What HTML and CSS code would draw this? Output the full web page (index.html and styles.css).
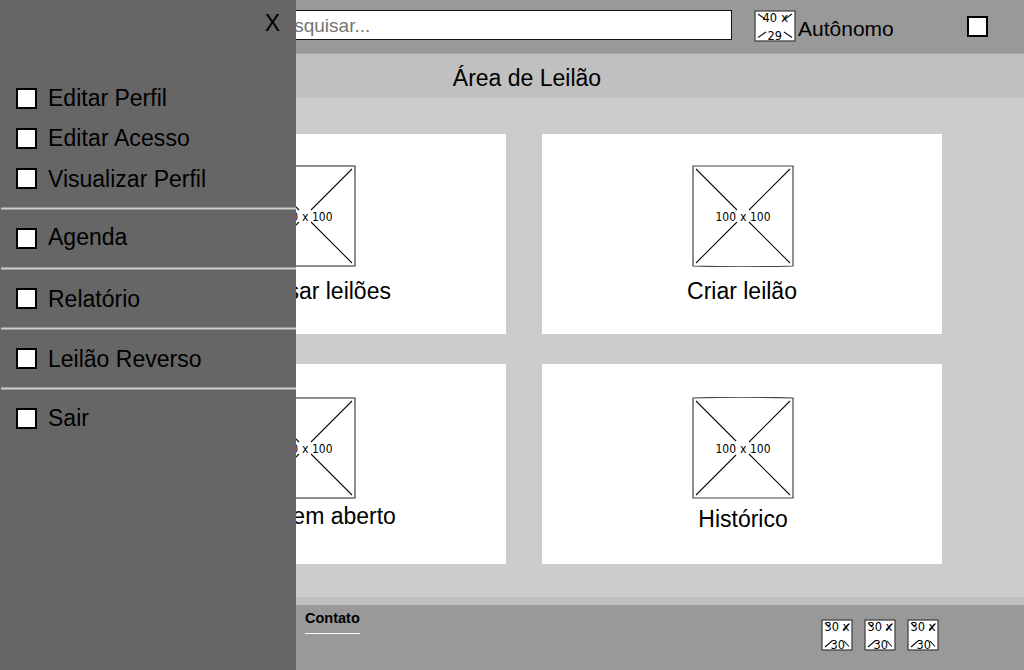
FILE: index.html
```html
<!DOCTYPE html>
<html lang="pt-BR">
<head>
<meta charset="utf-8">
<title>Área de Leilão</title>
<link rel="stylesheet" href="styles.css">
</head>
<body>
<div class="page">
  <header class="topbar">
    <input class="search" type="text" placeholder="Pesquisar...">
    <svg class="avatar" width="42" height="32">
      <rect x="1" y="1" width="40" height="30" fill="#fff" stroke="#444" stroke-width="1.3"/>
      <path d="M4 4L11 9M29.500 10L38 4M4 27.500L12 22M30 22L38 27.500" class="stroke"/>
      <text x="8.500" y="12" textLength="14.500" lengthAdjust="spacingAndGlyphs">40</text>
      <text x="27" y="12" textLength="7">x</text>
      <text x="13.500" y="30" textLength="14.500" lengthAdjust="spacingAndGlyphs">29</text>
    </svg>
    <span class="user">Autônomo</span>
    <span class="box"></span>
  </header>
  <h1 class="title">Área de Leilão</h1>
  <main class="cards">
    <section class="card">
      <svg class="picture" width="102" height="102">
        <rect x="1" y="1" width="100" height="100" class="frame"/>
        <path d="M4 4L45 45M98 4L57 45M4 98L45 57M98 98L57 57" class="stroke"/>
        <text x="23.500" y="56" textLength="20.500" lengthAdjust="spacingAndGlyphs">100</text>
        <text x="48" y="56" textLength="6.500" lengthAdjust="spacingAndGlyphs">x</text>
        <text x="58" y="56" textLength="20.500" lengthAdjust="spacingAndGlyphs">100</text>
      </svg>
      <span class="caption">Pesquisar leilões</span>
    </section>
    <section class="card right">
      <svg class="picture" width="102" height="102">
        <path d="M1 101V1H101V101Q51 102.500 1 101Z" class="frame"/>
        <path d="M4 4L45 45M98 4L57 45M4 98L45 57M98 98L57 57" class="stroke"/>
        <text x="23.500" y="56" textLength="20.500" lengthAdjust="spacingAndGlyphs">100</text>
        <text x="48" y="56" textLength="6.500" lengthAdjust="spacingAndGlyphs">x</text>
        <text x="58" y="56" textLength="20.500" lengthAdjust="spacingAndGlyphs">100</text>
      </svg>
      <span class="caption">Criar leilão</span>
    </section>
    <section class="card lower open">
      <svg class="picture" width="102" height="102">
        <rect x="1" y="1" width="100" height="100" class="frame"/>
        <path d="M4 4L45 45M98 4L57 45M4 98L45 57M98 98L57 57" class="stroke"/>
        <text x="23.500" y="56" textLength="20.500" lengthAdjust="spacingAndGlyphs">100</text>
        <text x="48" y="56" textLength="6.500" lengthAdjust="spacingAndGlyphs">x</text>
        <text x="58" y="56" textLength="20.500" lengthAdjust="spacingAndGlyphs">100</text>
      </svg>
      <span class="caption">Leilões em aberto</span>
    </section>
    <section class="card right lower">
      <svg class="picture" width="102" height="102">
        <path d="M1 1V101H101V1Q51 -.5 1 1Z" class="frame"/>
        <path d="M4 4L44 44M98 4L57 45M4 98L44 58M98 98L57 57" class="stroke"/>
        <text x="23.500" y="56" textLength="20.500" lengthAdjust="spacingAndGlyphs">100</text>
        <text x="48" y="56" textLength="6.500" lengthAdjust="spacingAndGlyphs">x</text>
        <text x="58" y="56" textLength="20.500" lengthAdjust="spacingAndGlyphs">100</text>
      </svg>
      <span class="caption">Histórico</span>
    </section>
  </main>
  <footer class="footer">
    <a class="contact">Contato</a>
    <div class="socials">
      <svg width="32" height="32">
        <rect x="1" y="1" width="30" height="30" fill="#fff" stroke="#444" stroke-width="1.3"/>
        <path d="M4 4L8 8M22 11L28.500 4.500M4 28L11 22M23 22L28 27.500" class="stroke"/>
        <text x="3.500" y="12" textLength="14.500" lengthAdjust="spacingAndGlyphs">30</text>
        <text x="21.500" y="12" textLength="7">x</text>
        <text x="9.500" y="30" textLength="14.500" lengthAdjust="spacingAndGlyphs">30</text>
      </svg>
      <svg width="32" height="32">
        <rect x="1" y="1" width="30" height="30" fill="#fff" stroke="#444" stroke-width="1.3"/>
        <path d="M4 4L8 8M22 11L28.500 4.500M4 28L11 22M23 22L28 27.500" class="stroke"/>
        <text x="3.500" y="12" textLength="14.500" lengthAdjust="spacingAndGlyphs">30</text>
        <text x="21.500" y="12" textLength="7">x</text>
        <text x="9.500" y="30" textLength="14.500" lengthAdjust="spacingAndGlyphs">30</text>
      </svg>
      <svg width="32" height="32">
        <rect x="1" y="1" width="30" height="30" fill="#fff" stroke="#444" stroke-width="1.3"/>
        <path d="M4 4L8 8M22 11L28.500 4.500M4 28L11 22M23 22L28 27.500" class="stroke"/>
        <text x="3.500" y="12" textLength="14.500" lengthAdjust="spacingAndGlyphs">30</text>
        <text x="21.500" y="12" textLength="7">x</text>
        <text x="9.500" y="30" textLength="14.500" lengthAdjust="spacingAndGlyphs">30</text>
      </svg>
    </div>
  </footer>
</div>
<aside class="menu">
  <div class="close">X</div>
  <nav>
    <div class="group">
      <a class="item"><span class="box"></span><span>Editar Perfil</span></a>
      <a class="item"><span class="box"></span><span class="wide">Editar Acesso</span></a>
      <a class="item low"><span class="box"></span><span>Visualizar Perfil</span></a>
    </div>
    <div class="group ruled"><a class="item high"><span class="box"></span><span>Agenda</span></a></div>
    <div class="group ruled"><a class="item low"><span class="box"></span><span>Relatório</span></a></div>
    <div class="group ruled"><a class="item low"><span class="box"></span><span>Leilão Reverso</span></a></div>
    <div class="group ruled"><a class="item"><span class="box"></span><span>Sair</span></a></div>
  </nav>
</aside>
</body>
</html>
```
FILE: styles.css
```css
* { box-sizing: border-box; }
body {
  margin: 0;
  width: 1024px;
  height: 670px;
  overflow: hidden;
  position: relative;
  font: 23px/26px "Liberation Sans", Arial, sans-serif;
  color: #000;
  background: #ccc;
}
svg { display: block; flex: none; }
svg text { font: 12px "DejaVu Sans", sans-serif; fill: #000; }
.frame { fill: #fff; stroke: #444; stroke-width: 1.2; }
.stroke { fill: none; stroke: #111; stroke-width: 1.1; }
.box {
  flex: none;
  width: 21px;
  height: 21px;
  background: #fff;
  border: 2px solid #000;
}

.page { display: flex; flex-direction: column; height: 670px; }
.topbar {
  display: flex;
  align-items: flex-start;
  height: 54px;
  padding: 10px 36px 0 246px;
  background: #999;
  border-bottom: 1px solid #a6a6a6;
}
.search {
  width: 486px;
  height: 30px;
  padding: 1px 0 0 24px;
  border: 1px solid #111;
  border-radius: 0;
  background: #fff;
  font: 19px "Liberation Sans", Arial, sans-serif;
}
.search::placeholder { color: #757575; }
.avatar { margin-left: 22px; }
.user { margin: 6px 0 0 2px; font-size: 21px; }
.topbar .box { margin: 6px 0 0 auto; }
.title {
  height: 44px;
  margin: 0;
  padding: 11px 0 0 30px;
  font-size: 23px;
  font-weight: 400;
  text-align: center;
  background: #c0c0c0;
}
.cards {
  display: grid;
  grid-template-columns: 400px 400px;
  grid-auto-rows: 200px;
  gap: 30px 36px;
  height: 499px;
  padding: 36px 0 0 106px;
}
.card {
  display: flex;
  flex-direction: column;
  align-items: center;
  padding: 31px 2px 0 0;
  background: #fff;
}
.card.right { padding-right: 0; padding-left: 2px; }
.card.lower { padding-top: 33px; }
.caption { margin: 11px 2px 0 0; }
.lower .caption { margin: 7px 0 0; }
.open .caption { margin: 4px 1px 0 0; }
.footer {
  flex: 1;
  display: flex;
  align-items: flex-start;
  justify-content: space-between;
  padding: 5px 85px 0 305px;
  border-top: 8px solid #c0c0c0;
  background: #999;
}
.contact {
  width: 55px;
  height: 24px;
  border-bottom: 1px solid #fffff0;
  font-size: 14.5px;
  line-height: 17px;
  font-weight: 700;
  white-space: nowrap;
}
.socials { display: flex; gap: 11px; padding-top: 9px; }

.menu {
  position: absolute;
  top: 0;
  left: 0;
  width: 296px;
  height: 670px;
  background: #666;
}
.close { height: 78px; padding: 10px 16px 0 0; text-align: right; }
.group { height: 129px; }
.item { display: flex; align-items: center; gap: 11px; height: 40px; padding-left: 16px; }
.wide { letter-spacing: 0.1px; }
.ruled {
  height: 60px;
  padding-top: 11px;
  margin-left: 1px;
  background: linear-gradient(#999 0 1px, #d0d0d0 1px 2px, #999 2px 3px, transparent 3px) no-repeat;
}
.ruled .item { padding-left: 15px; }
.low span:last-child { padding-top: 2px; }
.high span:last-child { padding-bottom: 2px; }
```
